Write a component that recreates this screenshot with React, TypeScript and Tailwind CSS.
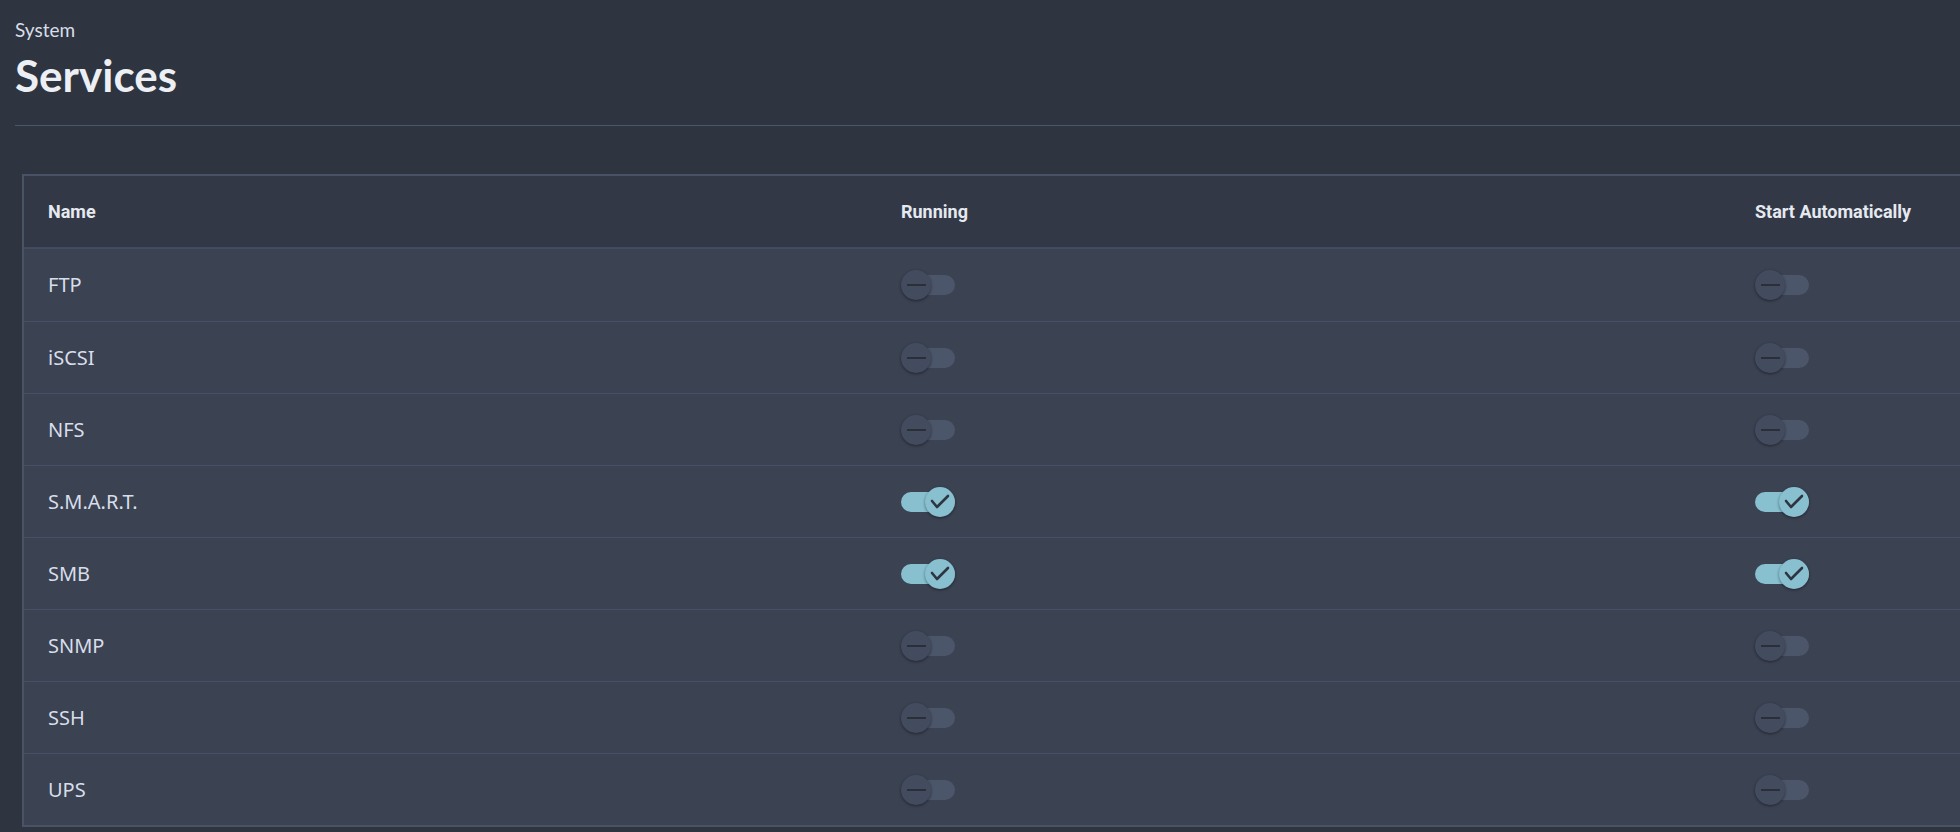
import React from "react";

interface Service {
  name: string;
  running: boolean;
  autostart: boolean;
}

const services: Service[] = [
  { name: "FTP", running: false, autostart: false },
  { name: "iSCSI", running: false, autostart: false },
  { name: "NFS", running: false, autostart: false },
  { name: "S.M.A.R.T.", running: true, autostart: true },
  { name: "SMB", running: true, autostart: true },
  { name: "SNMP", running: false, autostart: false },
  { name: "SSH", running: false, autostart: false },
  { name: "UPS", running: false, autostart: false },
];

function Toggle({ on }: { on: boolean }) {
  return (
    <div className="relative flex h-[30px] w-[54px] items-center">
      <div
        className={
          on
            ? "absolute inset-x-0 h-[20px] rounded-full bg-[#88c0d0]"
            : "absolute left-[4px] right-0 h-[20px] rounded-full bg-[#4c566a]"
        }
      />
      <div
        className={
          on
            ? "absolute right-0 top-0 h-[30px] w-[30px] rounded-full bg-[#88c0d0] shadow-[0_1px_3px_rgba(0,0,0,0.45)]"
            : "absolute left-0 top-0 h-[30px] w-[30px] rounded-full bg-[#434c5e] shadow-[0_1px_3px_rgba(0,0,0,0.45)]"
        }
      >
        <svg viewBox="0 0 30 30" className="h-[30px] w-[30px]">
          {on ? (
            <path d="M7 14 L12 20 L23 9" fill="none" stroke="#2e3440" strokeWidth="2.6" strokeLinecap="round" strokeLinejoin="round" />
          ) : (
            <path d="M6 15 H25" stroke="#2b2f38" strokeWidth="2" />
          )}
        </svg>
      </div>
    </div>
  );
}

export default function App() {
  return (
    <div className="h-[832px] w-full overflow-hidden bg-[#2e3440]">
      {/* Page header */}
      <div className="pl-[15px] pt-[17px]">
        <div className="text-[19px] leading-[26px] text-[#d8dee9] [font-family:Lato,'Noto_Sans',sans-serif]">
          System
        </div>
        <h1 className="mt-[5px] text-[44px] font-bold leading-[54px] text-[#eceff4] [font-family:Lato,'Noto_Sans',sans-serif]">
          Services
        </h1>
        <div className="mt-[23px] h-px bg-[#4c566a]" />
      </div>

      {/* Services table */}
      <div className="ml-[22px] mt-[48px] w-[2600px] border-2 border-[#4a5365] bg-[#3b4252]">
        <div className="grid h-[73px] grid-cols-[853px_854px_1fr] items-center border-b-2 border-[#434c5e] bg-[#323846] pl-[24px] text-[18px] font-bold text-[#e5e9f0] [font-family:Roboto,'Liberation_Sans',sans-serif]">
          <div>Name</div>
          <div>Running</div>
          <div>Start Automatically</div>
        </div>
        {services.map((s, i) => (
          <div
            key={s.name}
            className={
              i === 0
                ? "grid h-[72px] grid-cols-[853px_854px_1fr] items-center pl-[24px]"
                : "grid h-[72px] grid-cols-[853px_854px_1fr] items-center border-t border-[#465064] pl-[24px]"
            }
          >
            <div className="text-[20px] text-[#d8dee9] [font-family:'Noto_Sans',sans-serif]">{s.name}</div>
            <div>
              <Toggle on={s.running} />
            </div>
            <div>
              <Toggle on={s.autostart} />
            </div>
          </div>
        ))}
      </div>
    </div>
  );
}
